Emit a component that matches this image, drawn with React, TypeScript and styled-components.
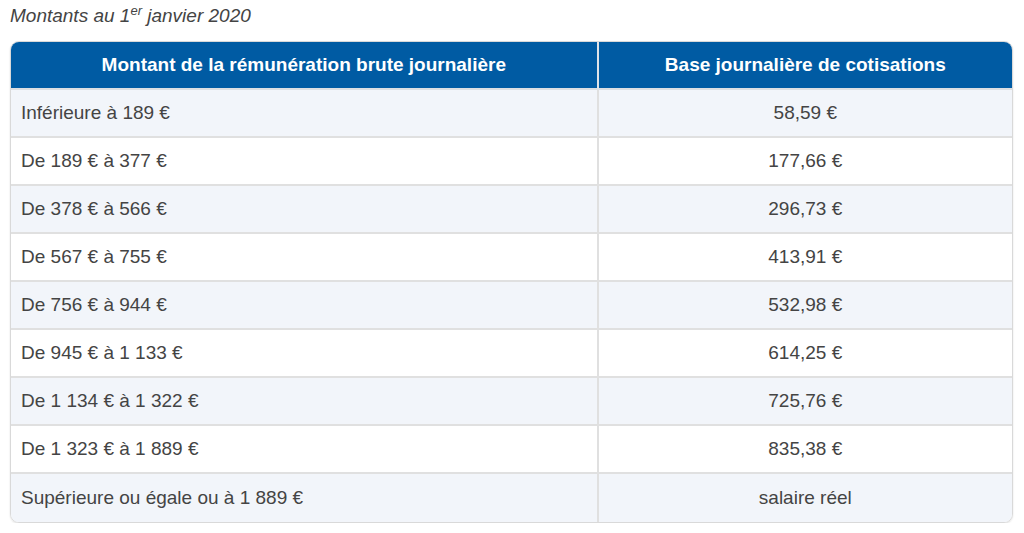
import styled, { createGlobalStyle } from 'styled-components'

const GlobalStyle = createGlobalStyle`
  body {
    margin: 0;
    background: #fff;
    font-family: 'Liberation Sans', Arial, sans-serif;
    color: #3d3d3d;
  }
`

const Page = styled.div`
  padding: 3px 11px 0 10px;
`

const Caption = styled.p`
  margin: 0 0 12px;
  font-size: 19px;
  line-height: 26px;
  font-style: italic;
  color: #444;
  sup {
    font-size: 13px;
    line-height: 0;
  }
`

const Frame = styled.div`
  border: 1px solid #d9d9d9;
  border-radius: 9px;
  overflow: hidden;
  box-shadow: 0 1px 2px rgba(0, 0, 0, 0.12);
`

const Table = styled.table`
  width: 100%;
  border-collapse: separate;
  border-spacing: 0;
  table-layout: fixed;
  font-size: 19px;
`

const HeadCell = styled.th<{ $last?: boolean }>`
  height: 46px;
  padding: 0 10px;
  background: #005ba3;
  color: #fff;
  font-weight: bold;
  font-size: 19px;
  text-align: center;
  border-right: ${(p) => (p.$last ? 'none' : '2px solid #dfe3e8')};
  border-bottom: 2px solid #dcdfe3;
`

const Row = styled.tr<{ $shade: boolean }>`
  background: ${(p) => (p.$shade ? '#f2f5fa' : '#fff')};
`

const Cell = styled.td<{ $center?: boolean; $lastRow?: boolean }>`
  height: ${(p) => (p.$lastRow ? '48px' : '46px')};
  padding: 0 10px;
  text-align: ${(p) => (p.$center ? 'center' : 'left')};
  color: #444;
  border-bottom: ${(p) => (p.$lastRow ? 'none' : '2px solid #e0e0e0')};
  border-right: ${(p) => (p.$center ? 'none' : '2px solid #e0e0e0')};
`

const rows: [string, string][] = [
  ['Inférieure à 189 €', '58,59 €'],
  ['De 189 € à 377 €', '177,66 €'],
  ['De 378 € à 566 €', '296,73 €'],
  ['De 567 € à 755 €', '413,91 €'],
  ['De 756 € à 944 €', '532,98 €'],
  ['De 945 € à 1 133 €', '614,25 €'],
  ['De 1 134 € à 1 322 €', '725,76 €'],
  ['De 1 323 € à 1 889 €', '835,38 €'],
  ['Supérieure ou égale ou à 1 889 €', 'salaire réel'],
]

export default function App() {
  return (
    <Page>
      <GlobalStyle />
      <Caption>
        Montants au 1<sup>er</sup> janvier 2020
      </Caption>
      <Frame>
        <Table>
          <colgroup>
            <col style={{ width: '58.7%' }} />
            <col />
          </colgroup>
          <thead>
            <tr>
              <HeadCell>Montant de la rémunération brute journalière</HeadCell>
              <HeadCell $last>Base journalière de cotisations</HeadCell>
            </tr>
          </thead>
          <tbody>
            {rows.map(([range, base], i) => (
              <Row key={range} $shade={i % 2 === 0}>
                <Cell $lastRow={i === rows.length - 1}>{range}</Cell>
                <Cell $center $lastRow={i === rows.length - 1}>
                  {base}
                </Cell>
              </Row>
            ))}
          </tbody>
        </Table>
      </Frame>
    </Page>
  )
}
